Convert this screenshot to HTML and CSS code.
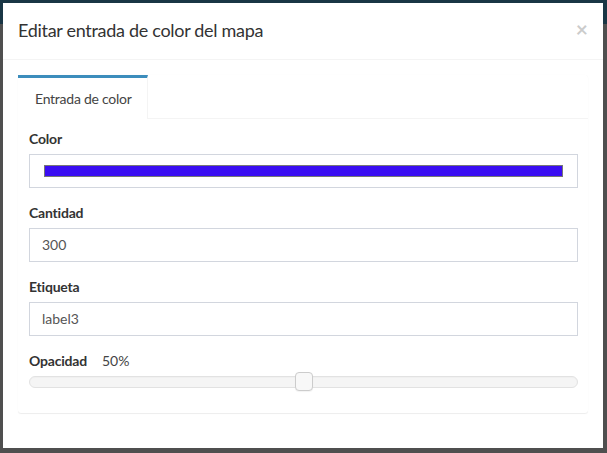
FILE: index.html
```html
<!DOCTYPE html>
<html lang="es">
<head>
<meta charset="utf-8">
<title>Editar entrada de color del mapa</title>
<link rel="stylesheet" href="styles.css">
</head>
<body>
<div class="modal">
  <div class="modal-header">
    <h4 class="modal-title">Editar entrada de color del mapa</h4>
    <span class="close">×</span>
  </div>
  <div class="modal-body">
    <div class="tabs-box">
      <ul class="nav-tabs">
        <li class="tab active">Entrada de color</li>
        <li class="tab-fill"></li>
      </ul>
      <div class="tab-content">
        <div class="form-group">
          <label class="label">Color</label>
          <div class="form-control color-control"><div class="swatch"></div></div>
        </div>
        <div class="form-group">
          <label class="label">Cantidad</label>
          <div class="form-control">300</div>
        </div>
        <div class="form-group">
          <label class="label">Etiqueta</label>
          <div class="form-control">label3</div>
        </div>
        <div class="form-group slider-group">
          <div class="label-row"><label class="label">Opacidad</label><span class="value">50%</span></div>
          <div class="slider"><div class="handle"></div></div>
        </div>
      </div>
    </div>
  </div>
</div>
</body>
</html>
```

FILE: styles.css
```css
* { box-sizing: border-box; }
html, body { margin: 0; height: 100%; }
body {
  padding: 3px 0 0 3px;
  background: linear-gradient(#193645 0, #193645 24px, #4f4f4f 24px, #4f4f4f 100%);
  font-family: Lato, "Open Sans", sans-serif;
  font-size: 14px;
  line-height: 1.42857;
  color: #333;
  overflow: hidden;
}
.modal {
  width: 600px;
  height: 445px;
  background: #fff;
}
.modal-header {
  display: flex;
  justify-content: space-between;
  align-items: flex-start;
  padding: 15px;
  border-bottom: 1px solid #f4f4f4;
}
.modal-title {
  margin: 0;
  font-size: 18px;
  font-weight: 400;
  line-height: 1.42857;
  color: #333;
  letter-spacing: -0.3px;
}
.close {
  font-size: 21px;
  font-weight: 700;
  line-height: 1;
  color: #000;
  opacity: 0.2;
  margin-top: 0;
  margin-right: 0;
}
.modal-body { padding: 15px; }
.tabs-box {
  background: #fff;
  border-radius: 3px;
  box-shadow: 0 1px 1px rgba(0,0,0,0.07), 0 0 1px rgba(0,0,0,0.04);
}
.nav-tabs {
  list-style: none;
  margin: 0;
  padding: 0;
  display: flex;
}
.tab {
  border-top: 3px solid #3c8dbc;
  border-right: 1px solid #f4f4f4;
  padding: 11px 15px 0 17px;
  height: 44px;
  color: #444;
  font-size: 14px;
  letter-spacing: -0.25px;
  line-height: 20px;
}
.tab-fill {
  flex: 1;
  border-bottom: 1px solid #f4f4f4;
  height: 44px;
}
.tab-content { padding: 10px; }
.form-group { margin-bottom: 15px; }
.label {
  display: block;
  font-weight: 700;
  margin: 0 0 5px 1px;
  line-height: 20px;
  letter-spacing: -0.2px;
}
.form-control {
  height: 34px;
  padding: 6px 12px;
  border: 1px solid #d2d6de;
  color: #555;
  font-size: 14px;
  line-height: 20px;
  margin-left: 1px;
}
.color-control { padding: 10px 14px; }
.swatch {
  height: 12px;
  background: #3a0df2;
  border: 1px solid #777;
}
.label-row { display: flex; align-items: baseline; }
.label-row .label { margin-right: 15px; }
.value { color: #444; }
.slider {
  display: flex;
  justify-content: center;
  align-items: center;
  height: 12px;
  margin-left: 1px;
  background: #f5f5f5;
  border: 1px solid #e2e2e2;
  border-radius: 6px;
  box-shadow: inset 0 1px 1px #f0f0f0;
}
.handle {
  width: 18px;
  height: 19px;
  background: #f8f8f8;
  border: 1px solid #ccc;
  border-radius: 4px;
  box-shadow: 0 1px 1px rgba(0,0,0,0.05);
}
.slider-group { margin-bottom: 15px; }
```
